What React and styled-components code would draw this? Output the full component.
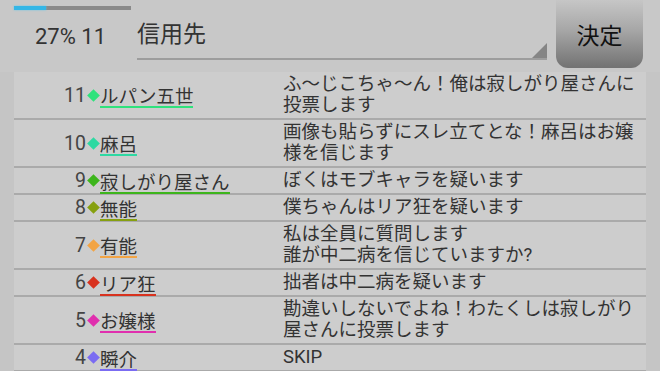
import React from 'react'
import styled, { createGlobalStyle } from 'styled-components'

const GlobalStyle = createGlobalStyle`
  html, body {
    margin: 0;
    padding: 0;
    background: #c5c5c5;
    overflow: hidden;
  }
  body {
    font-family: Roboto, "Noto Sans CJK JP", sans-serif;
  }
`

const votes = [
  { no: 11, name: 'ルパン五世', color: '#2fe27c', text: 'ふ～じこちゃ～ん！俺は寂しがり屋さんに投票します' },
  { no: 10, name: '麻呂', color: '#2ed9a2', text: '画像も貼らずにスレ立てとな！麻呂はお嬢様を信じます' },
  { no: 9, name: '寂しがり屋さん', color: '#3db51c', text: 'ぼくはモブキャラを疑います' },
  { no: 8, name: '無能', color: '#86a010', text: '僕ちゃんはリア狂を疑います' },
  { no: 7, name: '有能', color: '#f2a444', text: '私は全員に質問します\n誰が中二病を信じていますか?' },
  { no: 6, name: 'リア狂', color: '#d8321e', text: '拙者は中二病を疑います' },
  { no: 5, name: 'お嬢様', color: '#e02fae', text: '勘違いしないでよね！わたくしは寂しがり屋さんに投票します' },
  { no: 4, name: '瞬介', color: '#7b6cf2', text: 'SKIP' },
]

const Page = styled.div`
  width: 660px;
  height: 371px;
  display: flex;
  flex-direction: column;
`

const Header = styled.div`
  height: 72px;
  flex-shrink: 0;
  display: flex;
  align-items: flex-start;
  background: #c8c8c8;
`

const Status = styled.div`
  width: 123px;
  padding-left: 14px;
  display: flex;
  flex-direction: column;
`

const Progress = styled.div`
  margin-top: 6px;
  height: 4px;
  width: 117px;
  background: #8a8a8a;
`

const ProgressFill = styled.div`
  height: 100%;
  background: #34b6e6;
  box-shadow: 0 0 2px #5ccaf0;
`

const Stat = styled.div`
  margin-top: 14px;
  padding-left: 21px;
  font-size: 22px;
  line-height: 26px;
  color: #333;
`

const Field = styled.div`
  position: relative;
  flex: 1;
  margin-top: 14px;
  height: 46px;
  box-sizing: border-box;
  padding-top: 4px;
  border-bottom: 2px solid #9d9d9d;
  font-family: "Noto Sans CJK JP", sans-serif;
  font-size: 23px;
  line-height: 28px;
  color: #333;

  &::after {
    content: '';
    position: absolute;
    right: 0;
    bottom: 0;
    border-style: solid;
    border-width: 0 0 15px 15px;
    border-color: transparent transparent #858585 transparent;
  }
`

const Submit = styled.button`
  margin: 0 17px 0 9px;
  width: 87px;
  height: 68px;
  border: none;
  border-radius: 0 0 12px 12px;
  background: linear-gradient(#c6c6c6, #a6a6a6 45%, #727272);
  font-family: "Noto Sans CJK JP", sans-serif;
  font-size: 23px;
  color: #111;
  padding: 0;
`

const List = styled.div`
  margin: 0 14px;
  background: #cdcdcd;
  flex: 1;
`

const Row = styled.div`
  display: grid;
  grid-template-columns: 72px 14px 183px 1fr;
  align-items: center;
  border-bottom: 2px solid #aaaaaa;
  padding: 2px 0;
`

const Num = styled.span`
  text-align: right;
  font-size: 19.5px;
  line-height: 21px;
  color: #444;
`

const Gem = styled.span`
  justify-self: center;
  width: 9px;
  height: 9px;
  transform: rotate(45deg);
  background: ${p => p.$color};
`

const NameCell = styled.div`
  display: flex;
  height: 21px;
  align-items: center;
`

const Name = styled.span`
  font-family: "Noto Sans CJK JP", sans-serif;
  font-size: 18.5px;
  line-height: 18px;
  padding-top: 4px;
  padding-bottom: 2px;
  color: #333;
  border-bottom: 2px solid ${p => p.$color};
`

const Message = styled.div`
  font-family: Roboto, "Noto Sans CJK JP", sans-serif;
  font-size: 18.5px;
  line-height: 21px;
  color: #333;
  white-space: pre-line;
`

const App = () => (
  <Page>
    <GlobalStyle />
    <Header>
      <Status>
        <Progress>
          <ProgressFill style={{ width: '27%' }} />
        </Progress>
        <Stat>27% 11</Stat>
      </Status>
      <Field>信用先</Field>
      <Submit>決定</Submit>
    </Header>
    <List>
      {votes.map(v => (
        <Row key={v.no}>
          <Num>{v.no}</Num>
          <Gem $color={v.color} />
          <NameCell>
            <Name $color={v.color}>{v.name}</Name>
          </NameCell>
          <Message>{v.text}</Message>
        </Row>
      ))}
    </List>
  </Page>
)

export default App
